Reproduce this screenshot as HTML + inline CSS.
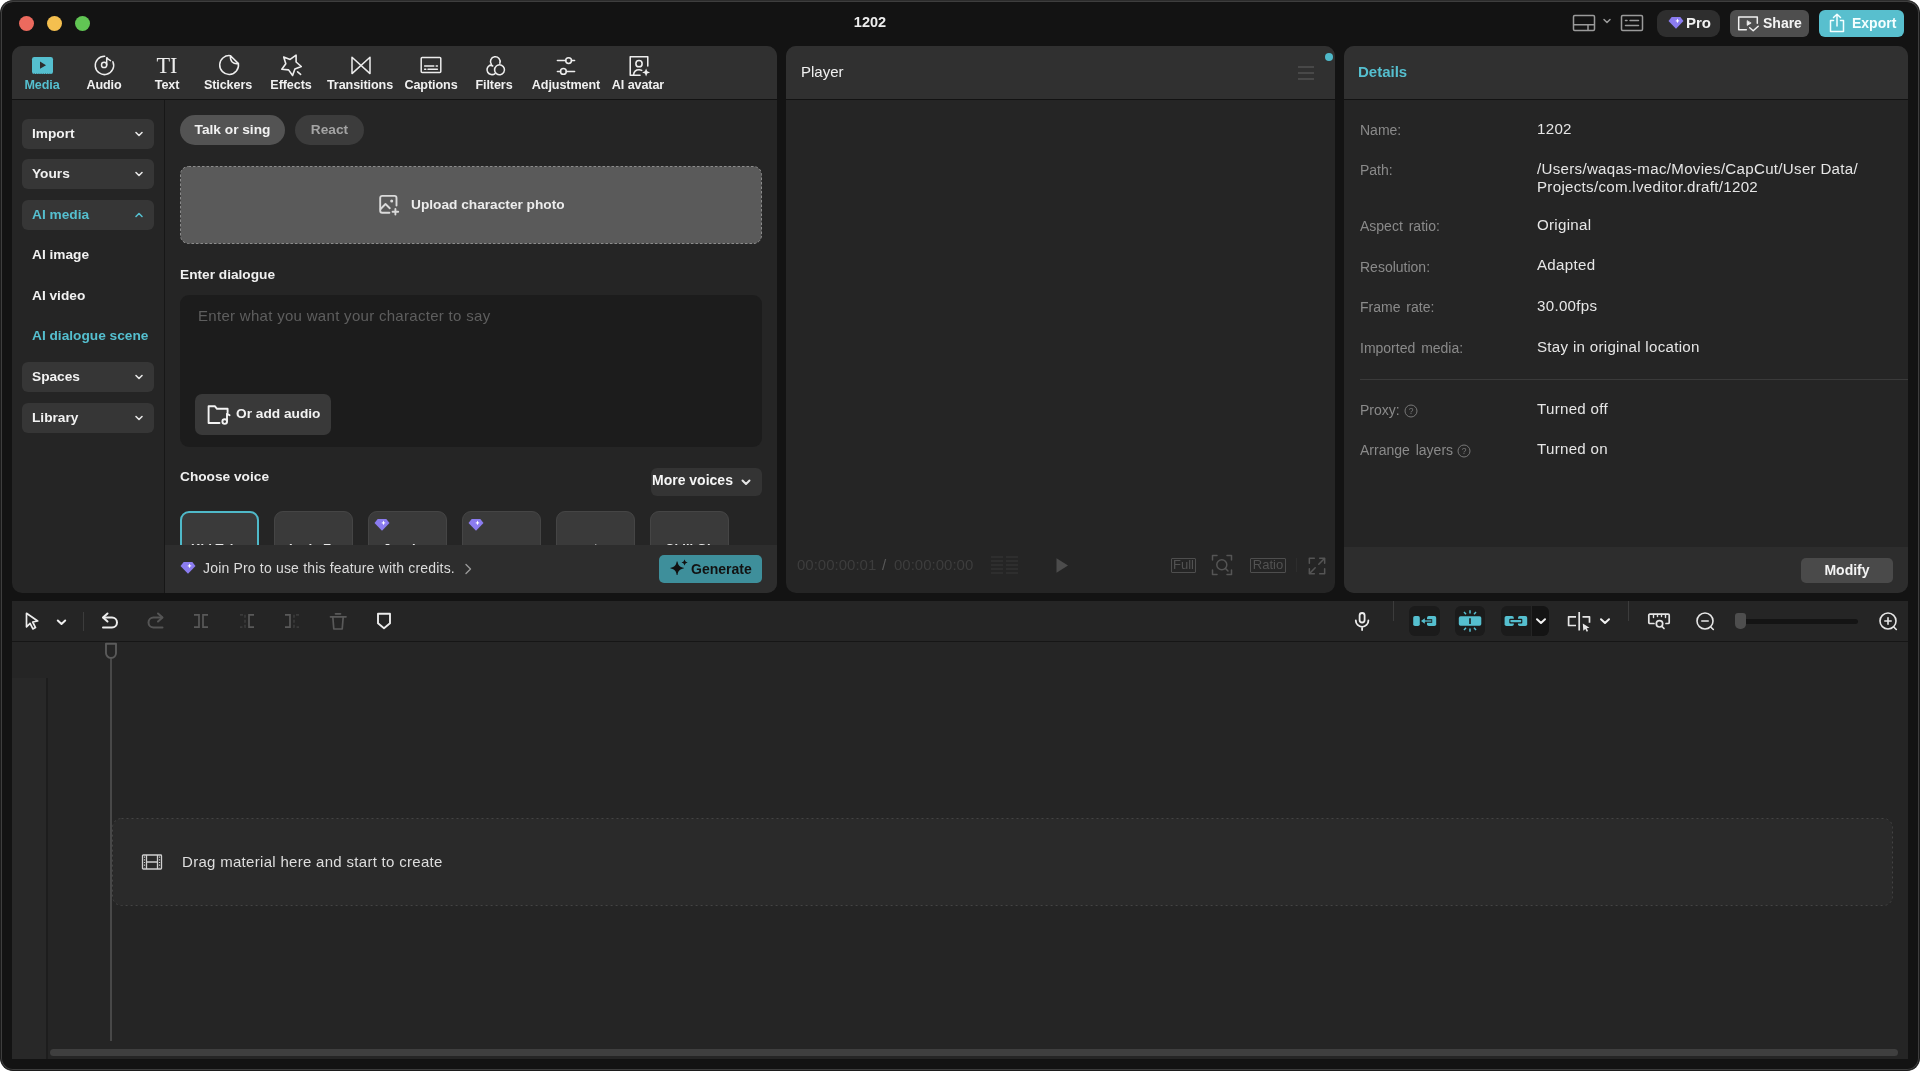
<!DOCTYPE html>
<html lang="en">
<head>
<meta charset="utf-8">
<title>1202</title>
<style>
*{box-sizing:border-box;margin:0;padding:0}
html,body{width:1920px;height:1071px;overflow:hidden;background:#fff}
body{font-family:"Liberation Sans",sans-serif;color:#eee;position:relative;font-size:14px}
.abs{position:absolute}
#win{position:absolute;left:0;top:0;width:1920px;height:1071px;background:#131313;border-radius:13px;border:1px solid #1c1c1c;border-top-color:#2c2c2c;box-shadow:inset 0 0 0 1px #3e3e3e,inset 0 1px 0 0 #555;overflow:hidden}
#root{will-change:transform;position:absolute;left:-1px;top:-1px;width:1920px;height:1071px}
.tl{position:absolute;top:16px;width:15px;height:15px;border-radius:50%}
.panel{position:absolute;background:#252525;border-radius:10px;overflow:hidden}
.phead{position:absolute;left:0;top:0;right:0;height:53px;background:#303030;border-bottom:1px solid #121212}
.b{font-weight:bold}
.t{position:absolute;white-space:nowrap;line-height:20px}
.tab{position:absolute;top:78px;height:14px;line-height:14px;font-size:12.6px;letter-spacing:-.1px;font-weight:bold;color:#f0f0f0;text-align:center;white-space:nowrap;transform:translateX(-50%)}
.sbtn{position:absolute;left:10px;width:132px;height:30px;background:#363636;border-radius:6px;font-weight:bold;font-size:13.7px;line-height:30px;padding-left:10px;color:#f2f2f2}
.sitem{position:absolute;left:20px;font-weight:bold;font-size:13.7px;line-height:20px;color:#f2f2f2;white-space:nowrap}
.teal{color:#55bfcf}
svg{position:absolute;overflow:visible}
.lbl{position:absolute;left:16px;font-size:14px;color:#8a8a8a;white-space:nowrap;line-height:18px;word-spacing:2px}
.val{position:absolute;left:193px;font-size:15.1px;letter-spacing:.3px;color:#e6e6e6;white-space:nowrap;line-height:18px}
.vc{position:absolute;top:465px;width:79px;height:60px;background:#3a3a3a;border-radius:9px;border:1px solid #454545}
</style>
</head>
<body>
<div id="win"><div id="root">

<!-- title bar -->
<div class="tl" style="left:19px;background:#ec6a5e"></div>
<div class="tl" style="left:47px;background:#f4bf4f"></div>
<div class="tl" style="left:75px;background:#61c554"></div>
<div class="t b" style="left:820px;width:100px;text-align:center;top:12px;font-size:14.5px;color:#ececec">1202</div>

<!-- TOPRIGHT -->

<svg style="left:1572px;top:13px" width="24" height="20" viewBox="0 0 24 20" fill="none" stroke="#9a9a9a" stroke-width="1.500" stroke-linejoin="round"><rect x="1.500" y="2.500" width="21" height="15" rx="1.200"/><path d="M1.500 11.800h21M16 11.800v5.700"/></svg>
<svg style="left:1602px;top:17px" width="10" height="8" viewBox="0 0 10 8" fill="none" stroke="#9a9a9a" stroke-width="1.500" stroke-linecap="round" stroke-linejoin="round"><path d="M2 2.500l3 3 3-3"/></svg>
<svg style="left:1620px;top:13px" width="24" height="20" viewBox="0 0 24 20" fill="none" stroke="#9a9a9a" stroke-width="1.500" stroke-linecap="round" stroke-linejoin="round"><rect x="1.500" y="2.500" width="21" height="15" rx="1.200"/><path d="M5.500 7.500h1.500M10 7.500h8.500M5.500 12.500h13"/></svg>
<div class="abs" style="left:1657px;top:9.600px;width:63px;height:27.600px;border-radius:9px;background:#2e2e2e"></div>
<svg style="left:1668px;top:16px" width="16" height="14" viewBox="0 0 16 14"><path d="M3.700 1h8.600l3.200 3.900L8 12.800.5 4.900z" fill="#8b7cf0"/><path d="M9.500 2.600l.7 1.600 1.600.7-1.600.7-.7 1.600-.7-1.600-1.600-.7 1.600-.7z" fill="#fff"/></svg>
<div class="t b" style="left:1686px;top:13px;font-size:15px;color:#f2f2f2">Pro</div>
<div class="abs" style="left:1730px;top:9.600px;width:79px;height:27.600px;border-radius:6px;background:#4e4e4e"></div>
<svg style="left:1736px;top:13px" width="26" height="20" viewBox="0 0 26 20" fill="none" stroke="#f0f0f0" stroke-width="1.500" stroke-linecap="round" stroke-linejoin="round"><path d="M10.300 16.800H2.700V4.100h18.600v6.200"/><path d="M11.200 8v4.400l3.600-2.200z" fill="#f0f0f0" stroke-width=".8"/><path d="M13.700 14.800l3.500 3 5-4.500"/></svg>
<div class="t b" style="left:1763px;top:12.500px;font-size:14px;color:#f4f4f4">Share</div>
<div class="abs" style="left:1819px;top:9.600px;width:85px;height:27.600px;border-radius:6px;background:#58bfce"></div>
<svg style="left:1826px;top:12px" width="22" height="22" viewBox="0 0 22 22" fill="none" stroke="#f4ffff" stroke-width="1.500" stroke-linecap="round" stroke-linejoin="round"><path d="M7.500 8.500H4.500V19.500H17.500V8.500H14.500"/><path d="M11 14V2.500M7.500 5.500L11 2.200l3.500 3.300"/></svg>
<div class="t b" style="left:1852px;top:12.500px;font-size:14px;color:#f6ffff">Export</div>

<!-- LEFT PANEL -->
<div class="panel" id="left" style="left:12px;top:46px;width:765px;height:547px">

<div class="phead" style="height:54px"></div>
<!-- tabs: icons -->
<svg style="left:18px;top:7px" width="24" height="24" viewBox="0 0 24 24"><rect x="2" y="4" width="21" height="17" rx="2.2" fill="#55bfcf"/><path d="M10 8.6v7.2l6-3.6z" fill="#2d2d2d"/><path d="M4 20.4h17" stroke="#303030" stroke-width="0.8" stroke-dasharray="1 1.2" opacity=".6"/></svg>
<svg style="left:80px;top:7px" width="24" height="24" viewBox="0 0 24 24" fill="none" stroke="#ededed" stroke-width="1.500" stroke-linecap="round"><path d="M12.700 3.200A9.200 9.200 0 1 0 20.900 8.800"/><circle cx="12.100" cy="11.900" r="2.600"/><path d="M14.700 11.900V4.200c.4 1.600 2 2.300 3.800 3.400"/></svg>
<svg style="left:143px;top:7px" width="24" height="24" viewBox="0 0 24 24"><text x="12" y="19.6" text-anchor="middle" font-family="Liberation Serif,serif" font-size="22.5" fill="#ededed" textLength="21" lengthAdjust="spacingAndGlyphs">TI</text></svg>
<svg style="left:205px;top:7px" width="24" height="24" viewBox="0 0 24 24" fill="none" stroke="#ededed" stroke-width="1.5" stroke-linecap="round" stroke-linejoin="round"><path d="M13.5 2.7A9.4 9.4 0 1 0 21.4 10.6"/><path d="M13.500 2.700C12.900 8.300 16 11.400 21.400 10.600M13.500 2.700l7.900 7.900"/></svg>
<svg style="left:267px;top:7px" width="24" height="24" viewBox="0 0 24 24" fill="none" stroke="#ededed" stroke-width="1.600" stroke-linecap="round" stroke-linejoin="round"><path d="M17.100 2.200V9l5.200 4.500-6.400 2.500-2.300 6.500-4-5.600-6.800-.6 4-5.600L4.700 4l6.400 2.400z"/><path d="M18.600 18.800l3 2.600"/></svg>
<svg style="left:337px;top:7px" width="24" height="24" viewBox="0 0 24 24" fill="none" stroke="#ededed" stroke-width="1.5" stroke-linejoin="round"><path d="M3 4.2v16.4L21 4.2v16.4z"/></svg>
<svg style="left:407px;top:7px" width="24" height="24" viewBox="0 0 24 24" fill="none" stroke="#ededed" stroke-width="1.5" stroke-linecap="round" stroke-linejoin="round"><rect x="2.2" y="4.6" width="19.6" height="15" rx="1"/><path d="M5.6 13h9.2M17.2 13h1.2M5.6 16.2h1.2M9 16.2h9.4"/></svg>
<svg style="left:470.500px;top:7.500px" width="24" height="24" viewBox="0.600 0.600 22.800 22.800" fill="none" stroke="#ededed" stroke-width="1.5" stroke-linecap="round"><path d="M8.6 10.6A4.6 4.6 0 1 1 16.6 9.4"/><path d="M12 19.2A4.7 4.7 0 1 1 7.2 11.2c1 0 1.9.3 2.6.8"/><path d="M14.2 11.4a4.7 4.7 0 1 1-2.6 4.3c0-1.500.7-2.800 1.700-3.700"/></svg>
<svg style="left:542px;top:7.500px" width="24" height="24" viewBox="0 0 24 24" fill="none" stroke="#ededed" stroke-width="1.5" stroke-linecap="round"><path d="M3.400 6.600h8.400M17.400 6.600h3.200M3.400 17.400h3.200M12.200 17.400h8.400"/><circle cx="14.600" cy="6.600" r="2.900"/><circle cx="9.400" cy="17.400" r="2.900"/></svg>
<svg style="left:615px;top:7.500px" width="24" height="24" viewBox="0.500 0.500 23 23" fill="none" stroke="#ededed" stroke-width="1.5" stroke-linecap="round" stroke-linejoin="round"><path d="M13 20.800H3.600V3.200h16.800V12"/><circle cx="12" cy="9.800" r="3"/><path d="M6.800 20.600c.3-3.200 2.300-5 5.200-5 1 0 1.900.2 2.600.6"/><path d="M18.800 14.400l1.100 2.700 2.700 1.100-2.700 1.100-1.100 2.700-1.100-2.700-2.700-1.100 2.700-1.100z" fill="#ededed" stroke="none"/></svg>
<!-- tabs: labels -->
<div class="tab teal" style="left:30px;top:32px">Media</div>
<div class="tab" style="left:92px;top:32px">Audio</div>
<div class="tab" style="left:155px;top:32px">Text</div>
<div class="tab" style="left:216px;top:32px">Stickers</div>
<div class="tab" style="left:279px;top:32px">Effects</div>
<div class="tab" style="left:348px;top:32px">Transitions</div>
<div class="tab" style="left:419px;top:32px">Captions</div>
<div class="tab" style="left:482px;top:32px">Filters</div>
<div class="tab" style="left:554px;top:32px">Adjustment</div>
<div class="tab" style="left:626px;top:32px">AI avatar</div>
<!-- sidebar -->
<div class="abs" style="left:152px;top:54px;width:1px;height:493px;background:#171717"></div>
<div class="sbtn" style="top:73px">Import</div>
<div class="sbtn" style="top:113px">Yours</div>
<div class="sbtn teal" style="top:154px">AI media</div>
<div class="sitem" style="top:199px">AI image</div>
<div class="sitem" style="top:240px">AI video</div>
<div class="sitem teal" style="top:280px">AI dialogue scene</div>
<div class="sbtn" style="top:316px">Spaces</div>
<div class="sbtn" style="top:357px">Library</div>
<svg style="left:122px;top:84px" width="10" height="8" viewBox="0 0 10 8" fill="none" stroke="#e6e6e6" stroke-width="1.6" stroke-linecap="round" stroke-linejoin="round"><path d="M2 2.500l3 3 3-3"/></svg>
<svg style="left:122px;top:124px" width="10" height="8" viewBox="0 0 10 8" fill="none" stroke="#e6e6e6" stroke-width="1.6" stroke-linecap="round" stroke-linejoin="round"><path d="M2 2.500l3 3 3-3"/></svg>
<svg style="left:122px;top:165px" width="10" height="8" viewBox="0 0 10 8" fill="none" stroke="#55bfcf" stroke-width="1.6" stroke-linecap="round" stroke-linejoin="round"><path d="M2 5.500l3-3 3 3"/></svg>
<svg style="left:122px;top:327px" width="10" height="8" viewBox="0 0 10 8" fill="none" stroke="#e6e6e6" stroke-width="1.6" stroke-linecap="round" stroke-linejoin="round"><path d="M2 2.500l3 3 3-3"/></svg>
<svg style="left:122px;top:368px" width="10" height="8" viewBox="0 0 10 8" fill="none" stroke="#e6e6e6" stroke-width="1.6" stroke-linecap="round" stroke-linejoin="round"><path d="M2 2.500l3 3 3-3"/></svg>
<!-- MAIN -->

<div class="abs b" style="left:168px;top:69px;width:105px;height:30px;border-radius:15px;background:#535353;color:#f2f2f2;font-size:13.7px;line-height:29px;text-align:center">Talk or sing</div>
<div class="abs b" style="left:283px;top:69px;width:69px;height:30px;border-radius:15px;background:#3c3c3c;color:#a4a4a4;font-size:13.7px;line-height:29px;text-align:center">React</div>
<svg style="left:168px;top:120px" width="582" height="78" viewBox="0 0 582 78"><rect x=".5" y=".5" width="581" height="77" rx="8" fill="#5a5a5a" stroke="#8c8c8c" stroke-width="1" stroke-dasharray="2.500 2"/></svg>
<svg style="left:365px;top:147px" width="24" height="24" viewBox="0 0 24 24" fill="none" stroke="#dadada" stroke-width="1.900" stroke-linecap="round" stroke-linejoin="round"><path d="M12.400 19.800H5.200a2 2 0 0 1-2-2V4.900a2 2 0 0 1 2-2h12.300a2 2 0 0 1 2 2v7.600"/><path d="M3.600 16l4.900-5 4.300 4.200"/><circle cx="14.700" cy="7.900" r="1.500" fill="#dadada" stroke="none"/><path d="M18.400 15.900v5.600M15.600 18.700h5.600"/></svg>
<div class="t b" style="left:399px;top:149px;font-size:13.7px;color:#ececec">Upload character photo</div>
<div class="t b" style="left:168px;top:219px;font-size:13.7px;color:#f0f0f0">Enter dialogue</div>
<div class="abs" style="left:168px;top:249px;width:582px;height:152px;border-radius:9px;background:#1c1c1c"></div>
<div class="t" style="left:186px;top:260px;font-size:15px;letter-spacing:.3px;color:#5e5e5e">Enter what you want your character to say</div>
<div class="abs" style="left:183px;top:348px;width:136px;height:41px;border-radius:7px;background:#393939"></div>
<svg style="left:194px;top:357px" width="26" height="24" viewBox="0 0 26 24" fill="none" stroke="#f4f4f4" stroke-width="1.900" stroke-linecap="round" stroke-linejoin="round"><path d="M13.500 20H2.600V3.200h6.200l2.200 2.600h10.600v3.400"/><circle cx="18.700" cy="18.600" r="2.300"/><path d="M21 18.600V10.600l2.600 1.700"/></svg>
<div class="t b" style="left:224px;top:357.500px;font-size:13.7px;color:#f2f2f2">Or add audio</div>
<div class="t b" style="left:168px;top:421px;font-size:13.7px;color:#f0f0f0">Choose voice</div>
<div class="abs" style="left:639px;top:422px;width:111px;height:28px;border-radius:6px;background:#343434"></div>
<div class="t b" style="left:640px;top:424px;font-size:14px;color:#f6f6f6">More voices</div>
<svg style="left:728px;top:432px" width="12" height="9" viewBox="0 0 12 9" fill="none" stroke="#e6e6e6" stroke-width="2" stroke-linecap="round" stroke-linejoin="round"><path d="M2.500 2.500l3.500 3.500 3.500-3.500"/></svg>
<!-- voice cards -->
<div class="vc" style="left:168px;border:2px solid #4fb9c9"><div class="t" style="left:9px;top:26px;font-size:13px;font-weight:bold;color:#e8e8e8">Kid Tal..</div></div>
<div class="vc" style="left:262px"><div class="t" style="left:14px;top:27px;font-size:13px;font-weight:bold;color:#e8e8e8">Lady F..</div></div>
<div class="vc" style="left:356px"><div class="t" style="left:14px;top:27px;font-size:13px;font-weight:bold;color:#e8e8e8">Jessie</div></div>
<div class="vc" style="left:450px"><div class="t" style="left:14px;top:27px;font-size:13px;font-weight:bold;color:#e8e8e8">soma</div></div>
<div class="vc" style="left:544px"><div class="t" style="left:14px;top:27px;font-size:13px;font-weight:bold;color:#e8e8e8">santa</div></div>
<div class="vc" style="left:638px"><div class="t" style="left:14px;top:27px;font-size:13px;font-weight:bold;color:#e8e8e8">Chill Gi..</div></div>
<svg style="left:362px;top:472px" width="16" height="14" viewBox="0 0 16 14"><path d="M3.700 1h8.600l3.200 3.900L8 12.800.5 4.900z" fill="#8b7cf0"/><path d="M9.500 2.600l.7 1.600 1.600.7-1.600.7-.7 1.600-.7-1.600-1.600-.7 1.600-.7z" fill="#fff"/></svg>
<svg style="left:456px;top:472px" width="16" height="14" viewBox="0 0 16 14"><path d="M3.700 1h8.600l3.200 3.900L8 12.800.5 4.900z" fill="#8b7cf0"/><path d="M9.500 2.600l.7 1.600 1.600.7-1.600.7-.7 1.600-.7-1.600-1.600-.7 1.600-.7z" fill="#fff"/></svg>
<!-- bottom bar -->
<div class="abs" style="left:153px;top:499px;width:612px;height:48px;background:#2d2d2d"></div>
<svg style="left:168px;top:515px" width="16" height="14" viewBox="0 0 16 14"><path d="M3.700 1h8.600l3.200 3.900L8 12.800.5 4.900z" fill="#8b7cf0"/><path d="M9.500 2.600l.7 1.600 1.600.7-1.600.7-.7 1.600-.7-1.600-1.600-.7 1.600-.7z" fill="#fff"/></svg>
<div class="t" style="left:191px;top:512px;font-size:14px;letter-spacing:.18px;color:#dcdcdc">Join Pro to use this feature with credits.</div>
<svg style="left:451px;top:516px" width="10" height="14" viewBox="0 0 10 14" fill="none" stroke="#999" stroke-width="1.400" stroke-linecap="round" stroke-linejoin="round"><path d="M3 2.500l4.500 4.500L3 11.500"/></svg>
<div class="abs" style="left:647px;top:509px;width:103px;height:28px;border-radius:5px;background:#3e8f9b"></div>
<svg style="left:656px;top:512px" width="22" height="22" viewBox="0 0 22 22" fill="#111"><path d="M9.500 3.500c.6 3.900 2.200 5.600 6.200 6.300v.8c-4 .7-5.600 2.400-6.200 6.400h-.8c-.6-4-2.200-5.700-6.200-6.400v-.8c4-.7 5.600-2.400 6.200-6.300z"/><path d="M16.800 1.800c.3 1.600.9 2.200 2.500 2.500v.5c-1.600.3-2.200.9-2.500 2.500h-.5c-.3-1.600-.9-2.200-2.500-2.500v-.5c1.600-.3 2.200-.9 2.500-2.500z"/></svg>
<div class="t b" style="left:679px;top:513px;font-size:14px;color:#121212">Generate</div>
</div>

<!-- PLAYER PANEL -->
<div class="panel" id="player" style="left:786px;top:46px;width:549px;height:547px">

<div class="phead" style="height:54px"></div>
<div class="t" style="left:15px;top:16px;font-size:15px;color:#f0f0f0">Player</div>
<div class="abs" style="left:512px;top:20px;width:16px;height:2px;background:#484848;box-shadow:0 6px 0 #484848,0 12px 0 #484848"></div>
<div class="abs" style="left:539px;top:7px;width:8px;height:8px;border-radius:50%;background:#4fb9c9"></div>
<div class="t" style="left:11px;top:509px;font-size:15px;color:#3d3d3d">00:00:00:01</div>
<div class="t" style="left:96px;top:509px;font-size:15px;color:#585858">/</div>
<div class="t" style="left:108px;top:509px;font-size:15px;color:#3d3d3d">00:00:00:00</div>
<svg style="left:204px;top:509px" width="30" height="21" viewBox="0 0 30 21" fill="none" stroke="#2e2e2e" stroke-width="2"><path d="M1 2h12M1 6h12M1 10h12M1 14h12M1 18h12M16 2h12M16 6h12M16 10h12M16 14h12M16 18h12"/></svg>
<svg style="left:269px;top:511px" width="14" height="17" viewBox="0 0 14 17"><path d="M1.500 1.200v14.600L13 8.500z" fill="#4c4c4c"/></svg>
<div class="abs" style="left:385px;top:512px;width:25px;height:15px;border:1px solid #4e4e4e;border-radius:1px;color:#525252;font-size:13px;line-height:12.500px;text-align:center">Full</div>
<svg style="left:425px;top:508px" width="22" height="22" viewBox="0 0 22 22" fill="none" stroke="#555" stroke-width="1.500" stroke-linecap="round" stroke-linejoin="round"><path d="M1.500 6V1.500H6M16 1.500h4.500V6M20.500 16v4.500H16M6 20.500H1.500V16"/><circle cx="10.800" cy="10.800" r="5"/><path d="M14.500 14.500l2.500 2.500"/></svg>
<div class="abs" style="left:464px;top:512px;width:36px;height:15px;border:1px solid #4e4e4e;border-radius:1px;color:#525252;font-size:13px;line-height:12.500px;text-align:center">Ratio</div>
<div class="abs" style="left:510px;top:512px;width:1px;height:14px;background:#2d2d2d"></div>
<svg style="left:522px;top:511px" width="18" height="18" viewBox="0 0 20 20" fill="none" stroke="#555" stroke-width="1.700" stroke-linecap="round" stroke-linejoin="round"><path d="M1.500 7V1.500H7M13 1.500h5.500V7M18.500 13v5.500H13M7 18.500H1.500V13"/><path d="M12 8l6-6M8 12l-6 6"/></svg>
</div>

<!-- DETAILS PANEL -->
<div class="panel" id="details" style="left:1344px;top:46px;width:564px;height:547px">

<div class="phead" style="height:54px"></div>
<div class="t b teal" style="left:14px;top:16px;font-size:15px">Details</div>
<div class="lbl" style="top:75px">Name:</div><div class="val" style="top:74px">1202</div>
<div class="lbl" style="top:115px">Path:</div><div class="val" style="top:114px">/Users/waqas-mac/Movies/CapCut/User Data/<br>Projects/com.lveditor.draft/1202</div>
<div class="lbl" style="top:171px">Aspect ratio:</div><div class="val" style="top:170px">Original</div>
<div class="lbl" style="top:212px">Resolution:</div><div class="val" style="top:210px">Adapted</div>
<div class="lbl" style="top:252px">Frame rate:</div><div class="val" style="top:251px">30.00fps</div>
<div class="lbl" style="top:293px">Imported media:</div><div class="val" style="top:292px">Stay in original location</div>
<div class="abs" style="left:16px;top:333px;width:548px;height:1px;background:#3a3a3a"></div>
<div class="lbl" style="top:355px">Proxy:</div><div class="val" style="top:354px">Turned off</div>
<div class="lbl" style="top:395px">Arrange layers</div><div class="val" style="top:394px">Turned on</div>
<svg style="left:60.400px;top:357.500px" width="14" height="14" viewBox="0 0 14 14" fill="none" stroke="#777" stroke-width="1"><circle cx="7" cy="7" r="6"/><text x="7" y="10" font-size="8.500" text-anchor="middle" fill="#777" stroke="none" font-family="Liberation Sans,sans-serif">?</text></svg>
<svg style="left:113px;top:398px" width="14" height="14" viewBox="0 0 14 14" fill="none" stroke="#777" stroke-width="1"><circle cx="7" cy="7" r="6"/><text x="7" y="10" font-size="8.500" text-anchor="middle" fill="#777" stroke="none" font-family="Liberation Sans,sans-serif">?</text></svg>
<div class="abs" style="left:0;top:501px;width:564px;height:46px;background:#2d2d2d"></div>
<div class="abs b" style="left:457px;top:512px;width:92px;height:25px;border-radius:5px;background:#4a4a4a;color:#f4f4f4;font-size:14px;line-height:24px;text-align:center">Modify</div>
</div>

<!-- TIMELINE PANEL -->
<div class="panel" id="timeline" style="left:12px;top:601px;width:1896px;height:458px;border-radius:0">

<div class="abs" style="left:0;top:40px;width:1896px;height:1px;background:#161616"></div>
<div class="abs" style="left:0;top:77px;width:34px;height:381px;background:#282828"></div>
<div class="abs" style="left:34px;top:77px;width:2px;height:381px;background:#1d1d1d"></div>
<div class="abs" style="left:98px;top:58px;width:2px;height:382px;background:#484848"></div>
<svg style="left:92px;top:41px" width="14" height="19" viewBox="0 0 14 19" fill="none" stroke="#5a5a5a" stroke-width="1.900" stroke-linejoin="round"><path d="M2 1.800h10v9.200a5 5 0 0 1-10 0z"/></svg>
<svg style="left:100px;top:217px" width="1781" height="88" viewBox="0 0 1781 88"><rect x=".5" y=".5" width="1780" height="87" rx="9" fill="#2a2a2a" stroke="#444" stroke-width="1" stroke-dasharray="2 3"/></svg>
<svg style="left:129px;top:252px" width="22" height="18" viewBox="0 0 22 18" fill="none" stroke="#cfcfcf" stroke-width="1.300"><rect x="1.500" y="2" width="19" height="14" rx=".8"/><path d="M5.500 2v14M16.500 2v14M5.500 9h11" /><path d="M3.500 3.500v11M18.500 3.500v11" stroke-dasharray="1.200 1.500" stroke-width="1.200"/></svg>
<div class="t" style="left:170px;top:251px;font-size:15px;letter-spacing:.3px;color:#dedede">Drag material here and start to create</div>
<div class="abs" style="left:38px;top:448px;width:1848px;height:7px;border-radius:4px;background:#3f3f3f"></div>
<!-- TOOLBAR -->

<div class="abs" style="left:-12px;top:-601px;width:0;height:0">
<svg style="left:24px;top:611px" width="16" height="20" viewBox="0 0 16 20" fill="none" stroke="#ececec" stroke-width="1.700" stroke-linejoin="round"><path d="M2.500 2.300l11.200 7.700-5 1 2.800 5.600-2.600 1.300-2.800-5.600-3.600 3.500z"/></svg>
<svg style="left:56px;top:618px" width="11" height="8" viewBox="0 0 11 8" fill="none" stroke="#f0f0f0" stroke-width="2" stroke-linecap="round" stroke-linejoin="round"><path d="M1.800 2.500l3.700 3.400 3.700-3.400"/></svg>
<div class="abs" style="left:83px;top:612px;width:1px;height:19px;background:#3c3c3c"></div>
<svg style="left:100px;top:611px" width="20" height="20" viewBox="0 0 20 20" fill="none" stroke="#ececec" stroke-width="2" stroke-linecap="round" stroke-linejoin="round"><path d="M3 16.500h9a5 5 0 0 0 0-10H3.500"/><path d="M7.500 2.500L3 6.500l4.500 4"/></svg>
<svg style="left:146px;top:611px" width="20" height="20" viewBox="0 0 20 20" fill="none" stroke="#555" stroke-width="2" stroke-linecap="round" stroke-linejoin="round"><path d="M16.500 16.500h-9a5 5 0 0 1 0-10h8.500"/><path d="M12 2.500l4.500 4-4.500 4"/></svg>
<svg style="left:192px;top:612px" width="18" height="18" viewBox="0 0 18 18" fill="none" stroke-width="1.700"><path d="M2 2.800h5v12.400H2M16 2.800h-5v12.400h5" stroke="#595959"/></svg>
<svg style="left:238px;top:612px" width="18" height="18" viewBox="0 0 18 18" fill="none" stroke-width="1.700"><path d="M2 2.800h5v12.400H2" stroke="#3a3a3a" stroke-dasharray="3 2"/><path d="M16 2.800h-5v12.400h5" stroke="#595959"/></svg>
<svg style="left:283px;top:612px" width="18" height="18" viewBox="0 0 18 18" fill="none" stroke-width="1.700"><path d="M2 2.800h5v12.400H2" stroke="#595959"/><path d="M16 2.800h-5v12.400h5" stroke="#3a3a3a" stroke-dasharray="3 2"/></svg>
<svg style="left:328px;top:611px" width="20" height="20" viewBox="0 0 20 20" fill="none" stroke="#595959" stroke-width="1.700" stroke-linecap="round" stroke-linejoin="round"><path d="M2.500 5.800h15.500M7.500 2.800h5M4.800 6l1 12h8.400l1-12"/></svg>
<svg style="left:375px;top:611px" width="18" height="20" viewBox="0 0 18 20" fill="none" stroke="#ececec" stroke-width="1.900" stroke-linejoin="round"><path d="M3 2.800h12v9.500L9 17.200 3 12.300z"/></svg>
<!-- right side -->
<svg style="left:1352px;top:611px" width="20" height="20" viewBox="0 0 20 20" fill="none" stroke="#ececec" stroke-width="1.800" stroke-linecap="round"><rect x="7.600" y="2" width="5" height="9.500" rx="2.500"/><path d="M3.800 9.500a6.300 6.300 0 0 0 12.600 0M10.100 16v3"/></svg>
<div class="abs" style="left:1393px;top:601px;width:1px;height:20px;background:#3c3c3c"></div>
<div class="abs" style="left:1409px;top:606px;width:31px;height:30px;border-radius:6px;background:#1b1b1b"></div>
<div class="abs" style="left:1455px;top:606px;width:30px;height:30px;border-radius:6px;background:#1b1b1b"></div>
<div class="abs" style="left:1501px;top:606px;width:30px;height:30px;border-radius:6px 0 0 6px;background:#1b1b1b"></div>
<div class="abs" style="left:1532px;top:606px;width:17px;height:30px;border-radius:0 6px 6px 0;background:#141414"></div>
<svg style="left:1412px;top:614px" width="26" height="14" viewBox="0 0 26 14"><rect x="1.200" y="2" width="6.600" height="10" rx="1.800" fill="#55bfcf"/><rect x="15" y="2" width="9.200" height="10" rx="1.800" fill="#55bfcf"/><rect x="14" y="5.200" width="6.200" height="3.600" fill="#1b1b1b"/><path d="M9 7l3.800-2.800v5.600z" fill="#55bfcf"/><path d="M11 7h8.400" stroke="#55bfcf" stroke-width="1.300"/></svg>
<svg style="left:1457px;top:608px" width="26" height="26" viewBox="0 0 26 26"><rect x="1.800" y="8.300" width="22.500" height="9.500" rx="1.800" fill="#55bfcf"/><path d="M13 10.200v5.700" stroke="#1b1b1b" stroke-width="1.600"/><path d="M13 2.200v3.300M7 4l2 2.200M19 4l-2 2.200M13 23.800v-3.300M7 22l2-2.200M19 22l-2-2.200" stroke="#55bfcf" stroke-width="1.500"/></svg>
<svg style="left:1503px;top:614px" width="26" height="14" viewBox="0 0 26 14"><rect x="1.600" y="2" width="9.200" height="10" rx="1.800" fill="#55bfcf"/><rect x="15" y="2" width="9.200" height="10" rx="1.800" fill="#55bfcf"/><rect x="6.300" y="4.700" width="13" height="4.800" rx="1" fill="#1b1b1b"/><rect x="7.400" y="6" width="10.800" height="2.200" rx=".6" fill="#55bfcf"/></svg>
<svg style="left:1535px;top:617px" width="12" height="9" viewBox="0 0 12 9" fill="none" stroke="#f2f2f2" stroke-width="2" stroke-linecap="round" stroke-linejoin="round"><path d="M2 2.300l4 3.700 4-3.700"/></svg>
<svg style="left:1566px;top:610px" width="26" height="24" viewBox="0 0 26 24" fill="none" stroke="#e6e6e6" stroke-width="1.700" stroke-linejoin="round"><path d="M10 6.800H2.600v8.700H10M13.200 2v18.500M16.500 6.800h7v6"/><path d="M16.800 13.500l6.700 4.200-2.800.6 1.400 2.800-1.400.7-1.400-2.800-2 1.800z" fill="#e6e6e6" stroke="none"/></svg>
<svg style="left:1599px;top:617px" width="12" height="9" viewBox="0 0 12 9" fill="none" stroke="#f2f2f2" stroke-width="2" stroke-linecap="round" stroke-linejoin="round"><path d="M2 2.300l4 3.700 4-3.700"/></svg>
<div class="abs" style="left:1628px;top:601px;width:1px;height:20px;background:#3c3c3c"></div>
<svg style="left:1647px;top:612px" width="24" height="19" viewBox="0 0 24 19" fill="none" stroke="#e6e6e6" stroke-width="1.700" stroke-linecap="round" stroke-linejoin="round"><path d="M7 11.500H2.800a1 1 0 0 1-1-1V3.200a1 1 0 0 1 1-1h18.400a1 1 0 0 1 1 1v7.300a1 1 0 0 1-1 1H19"/><path d="M6.500 2.500v3M10.500 2.500v2M14.500 2.500v2M18.500 2.500v3" stroke-width="1.400"/><circle cx="12.500" cy="11.800" r="3.200"/><path d="M15 14.500l2 2"/></svg>
<svg style="left:1695px;top:611px" width="22" height="22" viewBox="0 0 22 22" fill="none" stroke="#e6e6e6" stroke-width="1.600" stroke-linecap="round"><circle cx="10" cy="10" r="8"/><path d="M6.800 10h6.400M16 16.200l2.300 2.300"/></svg>
<div class="abs" style="left:1744px;top:619px;width:114px;height:5px;border-radius:3px;background:#141414"></div>
<div class="abs" style="left:1735px;top:613px;width:11px;height:16px;border-radius:3px 3px 5px 5px;background:#4e4e4e"></div>
<svg style="left:1878px;top:611px" width="22" height="22" viewBox="0 0 22 22" fill="none" stroke="#e6e6e6" stroke-width="1.600" stroke-linecap="round"><circle cx="10" cy="10" r="8"/><path d="M6.800 10h6.400M10 6.800v6.400M16 16.200l2.300 2.300"/></svg>
</div>
</div>

</div></div>
</body>
</html>
